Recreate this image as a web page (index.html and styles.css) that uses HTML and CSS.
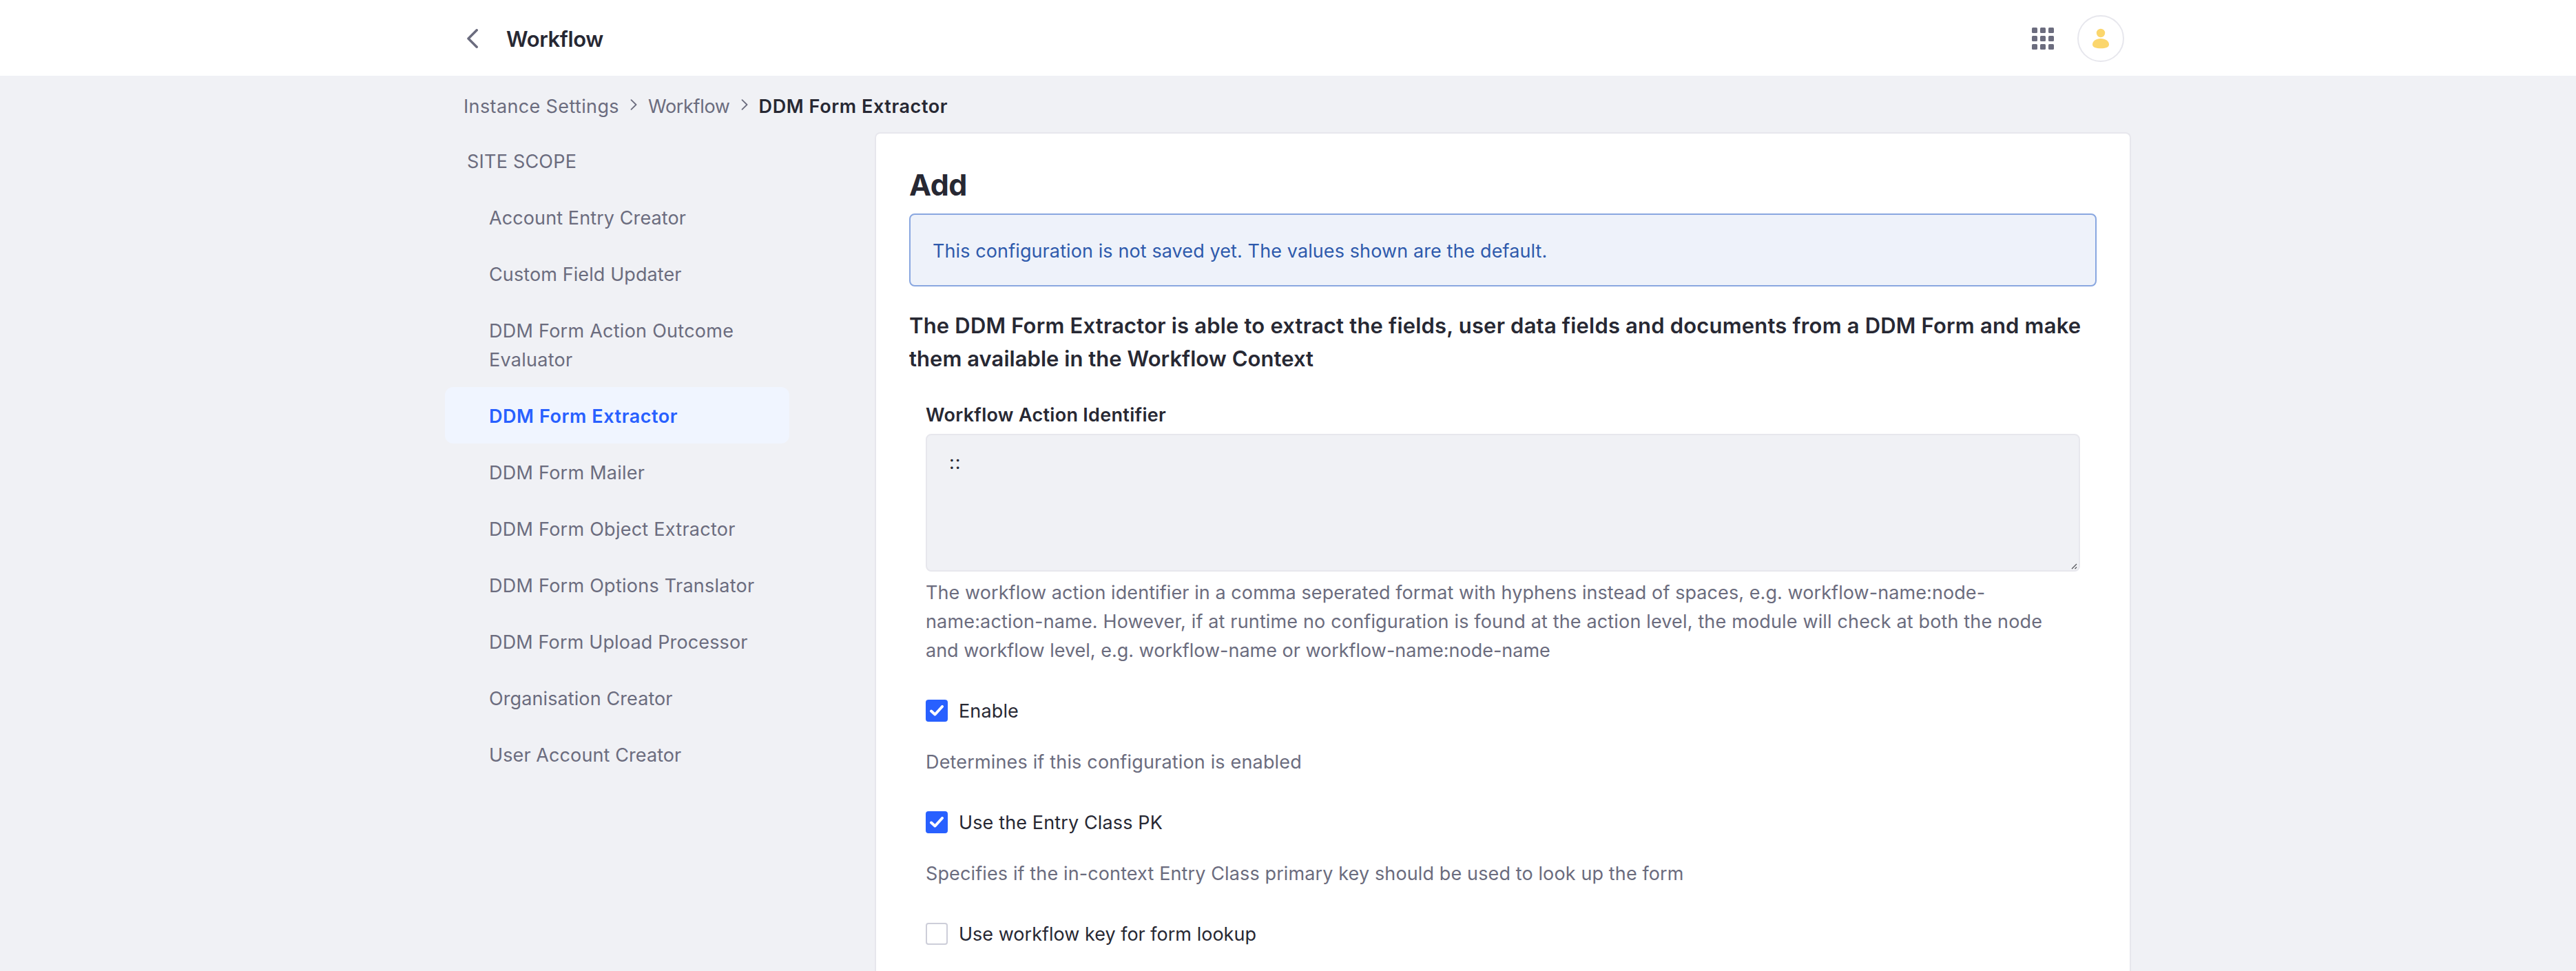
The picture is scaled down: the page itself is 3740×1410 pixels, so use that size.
FILE: index.html
```html
<!DOCTYPE html>
<html lang="en">
<head>
<meta charset="utf-8">
<title>Workflow</title>
<link rel="stylesheet" href="styles.css">
</head>
<body>
<header class="topbar">
  <div class="container topbar-inner">
    <svg class="back" viewBox="0 0 16 28" fill="none" stroke="#6b6c7e" stroke-width="3.500" stroke-linecap="round" stroke-linejoin="round"><path d="M14.2 1.8 2 14l12.2 12.2"/></svg>
    <h1 class="page-title">Workflow</h1>
    <svg class="grid-icon" viewBox="0 0 32 32" fill="#6b6c7e"><rect width="8" height="8" rx="1.5"/><rect x="12" width="8" height="8" rx="1.5"/><rect x="24" width="8" height="8" rx="1.5"/><rect y="12" width="8" height="8" rx="1.5"/><rect x="12" y="12" width="8" height="8" rx="1.5"/><rect x="24" y="12" width="8" height="8" rx="1.5"/><rect y="24" width="8" height="8" rx="1.5"/><rect x="12" y="24" width="8" height="8" rx="1.5"/><rect x="24" y="24" width="8" height="8" rx="1.5"/></svg>
    <span class="avatar"><svg viewBox="0 0 24 28" fill="#fbd66c"><circle cx="12" cy="6" r="6.2"/><path d="M12 14C5 14 0 17.800 0 22.500 0 27 5 28.200 12 28.200S24 27 24 22.500C24 17.800 19 14 12 14z"/></svg></span>
  </div>
</header>
<nav class="container breadcrumb">
  <span class="crumb-first">Instance Settings</span>
  <svg class="sep" viewBox="0 0 10 16" fill="none" stroke="#6b6c7e" stroke-width="1.800" stroke-linecap="round" stroke-linejoin="round"><path d="M1.500 1.200 8.500 8l-7 6.800"/></svg>
  <span class="crumb-mid">Workflow</span>
  <svg class="sep" viewBox="0 0 10 16" fill="none" stroke="#6b6c7e" stroke-width="1.800" stroke-linecap="round" stroke-linejoin="round"><path d="M1.500 1.200 8.500 8l-7 6.800"/></svg>
  <span class="crumb-current">DDM Form Extractor</span>
</nav>
<div class="container columns">
  <aside class="sidebar">
    <div class="side-title">SITE SCOPE</div>
    <a class="side-item tight">Account Entry Creator</a>
    <a class="side-item tight">Custom Field Updater</a>
    <a class="side-item">DDM Form Action Outcome<br>Evaluator</a>
    <a class="side-item active">DDM Form Extractor</a>
    <a class="side-item">DDM Form Mailer</a>
    <a class="side-item">DDM Form Object Extractor</a>
    <a class="side-item">DDM Form Options Translator</a>
    <a class="side-item snug">DDM Form Upload Processor</a>
    <a class="side-item tight">Organisation Creator</a>
    <a class="side-item tight">User Account Creator</a>
  </aside>
  <main class="sheet">
    <h2 class="sheet-title">Add</h2>
    <div class="alert">This configuration is not saved yet. The values shown are the default.</div>
    <h3 class="description"><span class="desc-lead">The DDM Form Extractor is able to extract the fields, user data fields and documents from a DDM Form and make</span><br>them available in the Workflow Context</h3>
    <div class="form">
      <label class="label" for="identifier">Workflow Action Identifier</label>
      <div class="textarea-wrap">
        <textarea class="textarea" id="identifier" readonly>::</textarea>
        <svg class="grip" viewBox="0 0 10 10" fill="none" stroke="#55565c" stroke-width="1.300"><path d="M1 8 8 1M5.500 8 8 5.500"/></svg>
      </div>
      <p class="help help-long"><span class="l1">The workflow action identifier in a comma seperated format with hyphens instead of spaces, e.g. workflow-name:node-</span><br><span class="l2">name:action-name. However, if at runtime no configuration is found at the action level, the module will check at both the node</span><br>and workflow level, e.g. workflow-name or workflow-name:node-name</p>
      <div class="check-row"><span class="box checked"><svg viewBox="0 0 20 16" fill="none" stroke="#fff" stroke-width="4" stroke-linecap="round" stroke-linejoin="round"><path d="M2 8.500 7.500 13.500 18 2"/></svg></span><span class="check-text">Enable</span></div>
      <p class="help">Determines if this configuration is enabled</p>
      <div class="check-row"><span class="box checked"><svg viewBox="0 0 20 16" fill="none" stroke="#fff" stroke-width="4" stroke-linecap="round" stroke-linejoin="round"><path d="M2 8.500 7.500 13.500 18 2"/></svg></span><span class="check-text">Use the Entry Class PK</span></div>
      <p class="help help-wide">Specifies if the in-context Entry Class primary key should be used to look up the form</p>
      <div class="check-row"><span class="box"></span><span class="check-text flat">Use workflow key for form lookup</span></div>
    </div>
  </main>
</div>
</body>
</html>
```
FILE: styles.css
```css
* { box-sizing: border-box; margin: 0; }
body {
  height: 1410px;
  overflow: hidden;
  display: flex;
  flex-direction: column;
  background: #f0f1f5;
  color: #272833;
  font: 400 27px/42px Inter, "Liberation Sans", sans-serif;
}
svg { display: block; flex: none; }
.container { width: 2448px; margin: 0 auto; flex: none; }

.topbar { flex: none; height: 110px; background: #fff; }
.topbar-inner { display: flex; align-items: center; height: 110px; padding: 2px 10px 0 32px; }
.back { width: 16px; height: 28px; }
.page-title {
  margin-left: 41px;
  padding-top: 2px;
  font-size: 31px;
  line-height: 48px;
  font-weight: 600;
  letter-spacing: -0.4px;
}
.grid-icon { width: 32px; height: 32px; margin-left: auto; }
.avatar {
  display: flex;
  align-items: center;
  justify-content: center;
  width: 68px;
  height: 68px;
  margin-left: 34px;
  border: 2px solid #e7e7ed;
  border-radius: 50%;
}
.avatar svg { width: 24px; height: 28px; overflow: visible; }

.breadcrumb {
  display: flex;
  align-items: center;
  height: 82px;
  padding: 24px 0 16px 27px;
  color: #6b6c7e;
}
.crumb-first { letter-spacing: 0.37px; }
.crumb-mid { letter-spacing: -0.32px; }
.crumb-current { color: #272833; font-weight: 600; letter-spacing: 0.58px; }
.sep { width: 10px; height: 16px; margin: 0 16px 7px; }

.columns { display: flex; justify-content: space-between; flex: 1; }
.sidebar { width: 500px; color: #6b6c7e; }
.side-title { padding: 22px 0 18px 32px; letter-spacing: 0.21px; }
.side-item {
  display: block;
  padding: 22px 0 18px 64px;
  border-radius: 12px;
  letter-spacing: 0.26px;
}
.side-item.tight { letter-spacing: 0.1px; }
.side-item.snug { letter-spacing: 0.15px; }
.side-item.active {
  background: #f0f5ff;
  color: #2860ff;
  font-weight: 600;
  letter-spacing: 0.56px;
}

.sheet {
  width: 1824px;
  padding: 44px 48px 0;
  background: #fff;
  border: 2px solid #e7e7ed;
  border-bottom: 0;
  border-radius: 8px 8px 0 0;
}
.sheet-title { font-size: 43px; line-height: 60px; font-weight: 700; letter-spacing: -0.46px; }
.alert {
  margin-top: 12px;
  padding: 32px 32px 28px;
  border: 2px solid #89a7e0;
  border-radius: 8px;
  background: #eef2fa;
  color: #2e5aac;
  letter-spacing: 0.1px;
}
.description { margin-top: 33px; font-size: 31px; line-height: 48px; font-weight: 600; letter-spacing: 0.04px; white-space: nowrap; }
.desc-lead { letter-spacing: 0.181px; }
.form { margin-top: 37px; padding: 0 24px; }
.label { display: block; font-weight: 600; letter-spacing: 0.3px; }
.textarea-wrap { position: relative; height: 200px; margin-top: 6px; }
.textarea {
  display: block;
  width: 100%;
  height: 200px;
  padding: 19px 32px;
  border: 2px solid #e7e7ed;
  border-radius: 8px;
  outline: 0;
  resize: none;
  overflow: hidden;
  background: #f0f1f5;
  color: #272833;
  font: inherit;
  letter-spacing: 1px;
}
.grip { position: absolute; right: 3px; bottom: 2px; width: 10px; height: 10px; }
.help { margin-top: 32px; color: #6b6c7e; white-space: nowrap; letter-spacing: 0.165px; }
.help-long { margin-top: 10px; letter-spacing: -0.01px; }
.help-wide { letter-spacing: 0.12px; }
.l1 { letter-spacing: 0.078px; }
.l2 { letter-spacing: 0.155px; }
.check-row { display: flex; align-items: center; margin-top: 46px; }
.box {
  display: flex;
  align-items: center;
  justify-content: center;
  width: 32px;
  height: 32px;
  margin-bottom: 2px;
  border: 2px solid #cdced9;
  border-radius: 4px;
  background: #fff;
}
.box.checked { border-color: #2860ff; background: #2860ff; }
.box svg { width: 20px; height: 16px; }
.check-text { margin-left: 16px; letter-spacing: 0.13px; }
.check-text.flat { letter-spacing: 0.01px; }
```
